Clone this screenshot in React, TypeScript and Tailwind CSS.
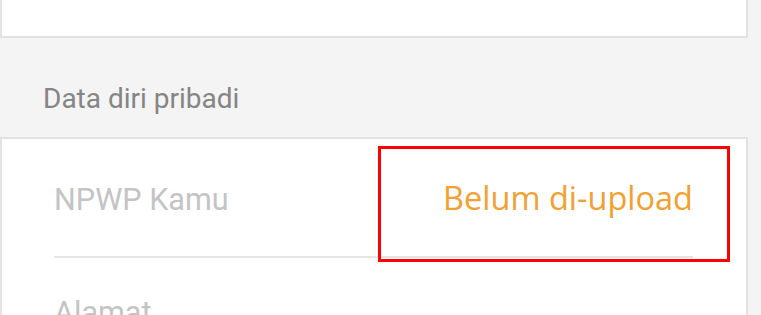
export default function App() {
  return (
    <div className="relative w-[761px] h-[315px] overflow-hidden bg-[#f4f4f4]">
      {/* upper card, cut off by the window */}
      <div className="w-[748px] h-[38px] bg-white border-x-2 border-b-2 border-[#e2e2e2]" />

      <div className="pt-[47px] pb-[24px] pl-[43px]">
        <div className="font-['Roboto',sans-serif] text-[28px] leading-[28px] text-[#858585]">Data diri pribadi</div>
      </div>

      <div className="w-[748px] h-[200px] bg-white border-x-2 border-t-2 border-[#e2e2e2]">
        <div className="ml-[52px] mr-[53px] pt-[43px] pb-[40px] flex items-baseline justify-between border-b-2 border-[#e4e4e4]">
          <span className="font-['Roboto',sans-serif] text-[30.6px] leading-[32px] text-[#c4c4c4]">NPWP Kamu</span>
          <span className="font-['Open_Sans',sans-serif] text-[32.5px] leading-[32px] text-[#f2a030]">Belum di-upload</span>
        </div>
        <div className="ml-[52px] pt-[39px]">
          <span className="font-['Roboto',sans-serif] text-[30.6px] leading-[32px] text-[#c4c4c4]">Alamat</span>
        </div>
      </div>

      {/* highlight drawn over the screenshot */}
      <div className="absolute left-[378px] top-[146px] w-[352px] h-[116px] border-[3px] border-[#ff0000]" />
    </div>
  );
}
